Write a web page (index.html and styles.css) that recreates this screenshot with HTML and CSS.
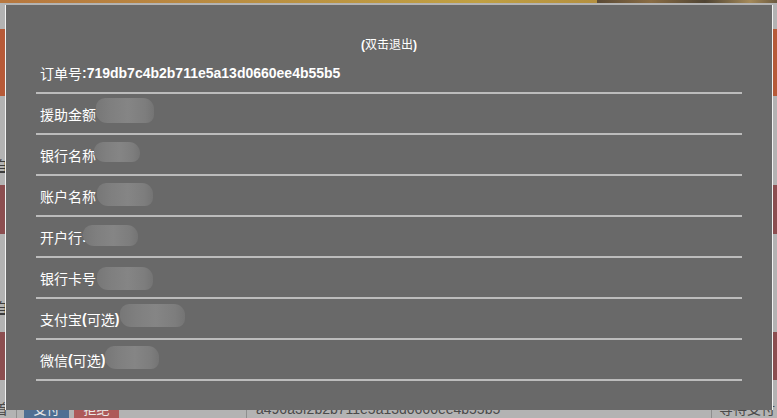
FILE: index.html
```html
<!DOCTYPE html>
<html lang="zh-CN">
<head>
<meta charset="utf-8">
<title>订单详情</title>
<link rel="stylesheet" href="styles.css">
</head>
<body>
<div class="page">
  <div class="topbar"><div class="topbar-gold"></div><div class="topbar-pic"></div></div>
  <div class="band gap27"></div>
  <div class="band orange h68"></div>
  <div class="band gray h92"><span class="edge-char c1">自</span></div>
  <div class="band maroon h50"></div>
  <div class="band gray h100"><span class="edge-char c2">自</span></div>
  <div class="band maroon h50"></div>
  <div class="band gray h18"></div>
  <div class="tablerow">
    <div class="cell first"><span class="clip">首</span></div>
    <div class="cell ops"><span class="btn blue">支付</span><span class="btn red">拒绝</span></div>
    <div class="cell order">a496a3f2b2b711e5a13d0660ee4b55b5</div>
    <div class="cell status">等待支付</div>
  </div>
</div>

<div class="modal">
  <div class="title"><span class="lat">(</span>双击退出<span class="lat">)</span></div>
  <ul class="list">
    <li class="row">订单号<span class="lat">:719db7c4b2b711e5a13d0660ee4b55b5</span></li>
    <li class="row">援助金额<span class="blob b2"></span></li>
    <li class="row">银行名称<span class="blob b3"></span></li>
    <li class="row">账户名称<span class="blob b4"></span></li>
    <li class="row">开户行<span class="lat">:</span><span class="blob b5"></span></li>
    <li class="row">银行卡号<span class="blob b6"></span></li>
    <li class="row">支付宝<span class="lat">(</span>可选<span class="lat">)</span><span class="blob b7"></span></li>
    <li class="row">微信<span class="lat">(</span>可选<span class="lat">)</span><span class="blob b8"></span></li>
  </ul>
</div>
</body>
</html>
```

FILE: styles.css
```css
* { box-sizing: border-box; }
html, body {
  margin: 0;
  padding: 0;
  width: 777px;
  height: 418px;
  overflow: hidden;
  background: #b3b3b3;
  font-family: "Noto Sans CJK SC", "Liberation Sans", sans-serif;
}
.page {
  display: flex;
  flex-direction: column;
  width: 777px;
  height: 418px;
  overflow: hidden;
}
.topbar { display: flex; height: 3px; }
.topbar-gold { flex: 0 0 597px; background: linear-gradient(90deg, #b7773f, #b98e42 40%, #c0a043 80%, #b49040); }
.topbar-pic { flex: 1; background: linear-gradient(90deg, #5a4a36, #8a6d45 30%, #4f4434 60%, #a58a5a 85%, #6b5a40); }
.band { position: relative; overflow: hidden; }
.gap27 { height: 27px; }
.h68 { height: 68px; }
.h92 { height: 92px; }
.h50 { height: 50px; }
.h100 { height: 100px; }
.h18 { height: 18px; }
.orange { background: #b75a38; }
.maroon { background: #8c4e50; }
.gray { background: #b3b3b3; }
.edge-char {
  display: block;
  margin-left: -6px;
  font-size: 14px;
  line-height: 16px;
  color: #3c3c3c;
  text-decoration: underline;
}
.c1 { margin-top: 61px; }
.c2 { margin-top: 65px; }

.tablerow {
  display: flex;
  height: 20px;
  font-size: 14px;
  line-height: 20px;
  color: #4a4a4a;
  background: #b3b3b3;
}
.cell { border-right: 1px solid #8e8e8e; overflow: hidden; white-space: nowrap; }
.first { flex: 0 0 17px; }
.clip { display: block; margin-left: -6px; }
.ops { flex: 0 0 230px; display: flex; gap: 5px; padding: 2px 0 0 7px; }
.btn { display: block; width: 45px; height: 18px; color: #e8e8e8; text-align: center; font-size: 13px; line-height: 18px; }
.blue { background: #4f6f93; }
.red { background: #ae5959; }
.order { flex: 0 0 465px; padding: 0 0 0 9px; font-family: "Liberation Sans", sans-serif; line-height: 22px; }
.status { flex: 1; border-right: 0; padding-left: 7px; }

.modal {
  position: absolute;
  left: 5px;
  top: 5px;
  width: 768px;
  height: 405px;
  background: #696969;
  border-left: 1px solid #f2f2f2;
  border-right: 1px solid #f2f2f2;
  color: #ffffff;
}
.lat { font-family: "Liberation Sans", sans-serif; font-weight: bold; }
.title {
  margin-top: 31px;
  height: 17px;
  text-align: center;
  font-size: 12px;
  line-height: 16px;
}
.list {
  list-style: none;
  margin: 0 0 0 30px;
  padding: 0;
  width: 706px;
}
.row {
  display: flex;
  align-items: center;
  height: 41px;
  padding-left: 4px;
  border-bottom: 2px solid #bcbcbc;
  font-size: 14px;
  line-height: 16px;
  white-space: nowrap;
}
.blob {
  display: block;
  height: 22px;
  margin-top: -5px;
  border-radius: 9px 11px 8px 11px;
  background: linear-gradient(90deg, #777 0%, #7f7f7f 25%, #858585 55%, #7d7d7d 85%, #747474 100%);
}
.b2 { width: 58px; height: 25px; margin-top: -6px; }
.b3 { width: 46px; height: 20px; margin-left: -2px; }
.b4 { width: 56px; height: 23px; margin-top: -3px; margin-left: 1px; }
.b5 { width: 55px; height: 21px; margin-top: -2px; margin-left: -4px; }
.b6 { width: 56px; height: 23px; margin-top: 2px; margin-left: 1px; }
.b7 { width: 65px; height: 23px; margin-top: -6px; margin-left: 1px; }
.b8 { width: 54px; height: 23px; margin-top: -4px; }
```
